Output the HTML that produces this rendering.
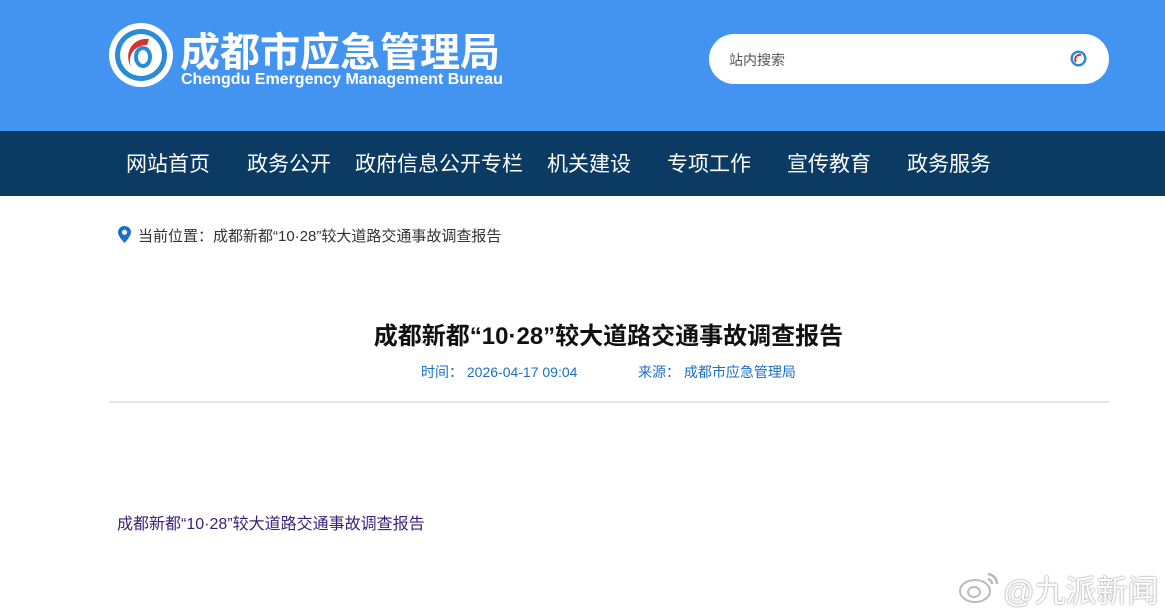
<!DOCTYPE html>
<html><head><meta charset="utf-8"><style>
*{margin:0;padding:0;box-sizing:border-box}
body{width:1165px;height:613px;overflow:hidden;background:#fff;font-family:"Liberation Sans","Noto Sans CJK SC",sans-serif;position:relative}
.top{position:absolute;left:0;top:0;width:1165px;height:131px;background:#4393f0}
.nav{position:absolute;left:0;top:131px;width:1165px;height:65px;background:#0b3a63}
.nav span{position:absolute;top:17px;color:#fff;font-size:21px}
.t{position:absolute;white-space:nowrap}
</style></head><body>
<div class="top">
<svg style="position:absolute;left:109px;top:23px" width="64" height="64" viewBox="0 0 64 64">
<circle cx="32" cy="32" r="32" fill="#fff"/><circle cx="32" cy="32" r="26" fill="#2a8bd6"/><circle cx="32" cy="32" r="21" fill="#fff"/>
<path d="M40 16 C24 14 14 30 22 44 C18 32 26 22 38 22Z" fill="#d6322c"/>
<ellipse cx="34" cy="34" rx="7" ry="9" fill="none" stroke="#2a8bd6" stroke-width="4"/>
</svg>
<div class="t" style="left:180px;top:20px;font-size:40px;font-weight:bold;color:#fff">成都市应急管理局</div>
<div class="t" style="left:181px;top:71px;font-size:16px;font-weight:bold;color:#fff">Chengdu Emergency Management Bureau</div>
<div style="position:absolute;left:709px;top:34px;width:400px;height:50px;border-radius:25px;background:#fff"></div>
<div class="t" style="left:729px;top:50px;font-size:14px;color:#555">站内搜索</div>
<svg style="position:absolute;left:1070px;top:50px" width="17" height="17" viewBox="0 0 17 17"><circle cx="8.5" cy="8.5" r="8" fill="#2a8bd6"/><circle cx="8.5" cy="8.5" r="5.5" fill="#fff"/><path d="M11 5 C6 4 4 9 6 12" stroke="#d6322c" stroke-width="2" fill="none"/></svg>
</div>
<div class="nav">
<span style="left:126px">网站首页</span><span style="left:247px">政务公开</span><span style="left:355px">政府信息公开专栏</span><span style="left:547px">机关建设</span><span style="left:667px">专项工作</span><span style="left:787px">宣传教育</span><span style="left:907px">政务服务</span>
</div>
<svg style="position:absolute;left:118px;top:226px" width="13" height="17" viewBox="0 0 13 17"><path d="M6.5 0C3 0 0 2.7 0 6.3 0 10.5 6.5 17 6.5 17S13 10.5 13 6.3C13 2.7 10 0 6.5 0Z" fill="#1b6fc4"/><circle cx="6.5" cy="6.3" r="2.5" fill="#fff"/></svg>
<div class="t" style="left:138px;top:225px;font-size:15px;color:#333">当前位置：成都新都“10·28”较大道路交通事故调查报告</div>
<div class="t" style="left:0;width:1217px;text-align:center;top:316px;font-size:24px;font-weight:bold;color:#111">成都新都“10·28”较大道路交通事故调查报告</div>
<div class="t" style="left:421px;top:362px;font-size:14px;color:#1b6fc4">时间：&nbsp;2026-04-17 09:04</div>
<div class="t" style="left:638px;top:362px;font-size:14px;color:#1b6fc4">来源：&nbsp;成都市应急管理局</div>
<div style="position:absolute;left:109px;top:401px;width:1000px;height:2px;background:#e6e6e6"></div>
<div class="t" style="left:117px;top:510px;font-size:16px;color:#3d1f7a">成都新都“10·28”较大道路交通事故调查报告</div>
<svg style="position:absolute;left:958px;top:570px" width="44" height="34" viewBox="0 0 44 34"><ellipse cx="17" cy="21" rx="15" ry="11" fill="#fff" stroke="#bbb" stroke-width="2"/><ellipse cx="16" cy="22" rx="6" ry="5" fill="none" stroke="#bbb" stroke-width="2"/><path d="M30 4 A10 10 0 0 1 39 14 M30 9 A5 5 0 0 1 34 14" stroke="#bbb" stroke-width="2.5" fill="none"/></svg>
<div class="t" style="left:1003px;top:566px;font-size:31px;color:#fff;text-shadow:0 0 2px #999,0 0 1px #999">@九派新闻</div>
</body></html>
